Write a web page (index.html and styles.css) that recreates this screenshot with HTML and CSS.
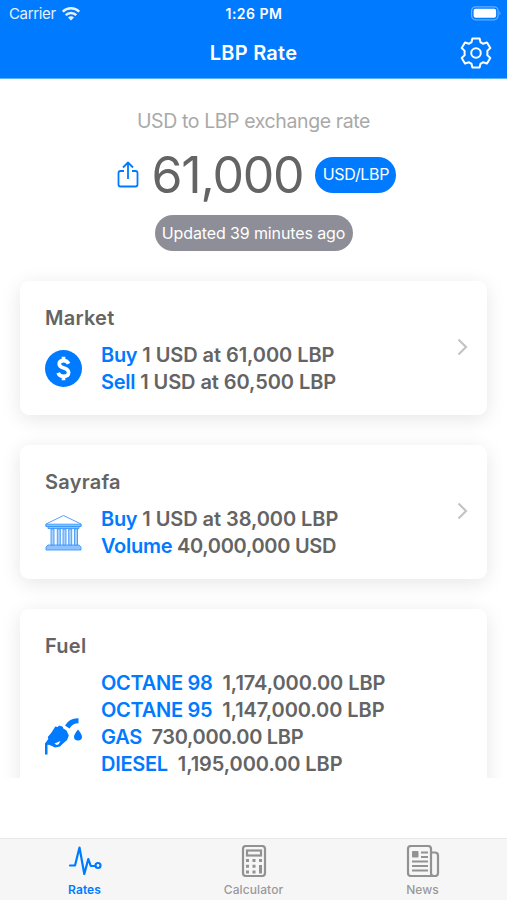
FILE: index.html
```html
<!DOCTYPE html>
<html lang="en">
<head>
<meta charset="utf-8">
<title>LBP Rate</title>
<link rel="stylesheet" href="styles.css">
</head>
<body>
<div class="app">
  <header class="header">
    <div class="status">
      <div class="carrier"><span>Carrier</span>
        <svg width="18" height="14" viewBox="0 0 18 14"><g fill="none" stroke="#fff" stroke-width="2.5"><path d="M.8 4.700a11.600 11.600 0 0 1 16.400 0"/><path d="M3.700 8.200a7.400 7.400 0 0 1 10.600 0"/></g><path d="M9 13.600 6 10.600a4.200 4.200 0 0 1 6 0z" fill="#fff"/></svg>
      </div>
      <div class="time">1:26 PM</div>
      <svg class="battery" width="31" height="15" viewBox="0 0 31 15"><rect x=".6" y=".8" width="26.5" height="13" rx="4" fill="none" stroke="#fff" stroke-opacity=".4" stroke-width="1.2"/><rect x="2.6" y="2.8" width="22.5" height="9" rx="2" fill="#fff"/><path d="M28.5 5.3q2 2 0 4z" fill="#fff" fill-opacity=".45"/></svg>
    </div>
    <div class="nav">
      <h1>LBP Rate</h1>
      <svg class="gear" width="32" height="32" viewBox="0 0 32 32" fill="none" stroke="#fff" stroke-width="2" stroke-linejoin="round"><path d="M12.400 1.400h7.200l.9 3.900q1.300.5 2.400 1.500l4.100-1.300 3.300 5.500-3 2.900q.3 2.100 0 4.200l3 2.900-3.300 5.500-4.100-1.300q-1.100 1-2.400 1.500l-.9 3.900h-7.200l-.9-3.900q-1.300-.5-2.400-1.500L5 26.500 1.700 21l3-2.900q-.3-2.100 0-4.200l-3-2.900L5 5.500l4.100 1.300q1.100-1 2.400-1.500z"/><circle cx="16" cy="16" r="4.800"/></svg>
    </div>
  </header>
  <main class="content">
    <section class="hero">
      <p class="caption">USD to LBP exchange rate</p>
      <div class="rate">
        <svg class="share" width="22" height="28" viewBox="0 0 22 28" fill="none" stroke="#007aff" stroke-width="1.800" stroke-linejoin="round"><path d="M7 10H3.500Q1.500 10 1.500 12v11.500q0 2 2 2h15q2 0 2-2V12q0-2-2-2H15M11 18V1.800M6 6.500l5-5 5 5"/></svg>
        <span class="amount">61,000</span>
        <span class="pair">USD/LBP</span>
      </div>
      <p class="updated"><span>Updated 39 minutes ago</span></p>
    </section>
    <section class="cards">
      <article class="card">
        <div class="body">
          <h2>Market</h2>
          <div class="info">
            <svg class="icon" width="37" height="37" viewBox="0 0 37 37"><circle cx="18.500" cy="18.500" r="18.500" fill="#007aff"/><path d="M23.600 13.800q-1.300-3.100-5.100-3.100-4.300 0-4.300 3.400 0 2.600 4.600 4 4.800 1.400 4.800 4.500 0 3.800-4.900 3.800-4.200 0-5.600-3.600M18.500 6.800v4M18.500 26v4.300" fill="none" stroke="#fff" stroke-width="3.700"/></svg>
            <div class="lines"><p><b>Buy</b> 1 USD at 61,000 LBP</p><p><b>Sell</b> 1 USD at 60,500 LBP</p></div>
          </div>
        </div>
        <svg class="chevron" width="11" height="18" viewBox="0 0 11 18"><path d="m1.500 1.500 7.500 7.500-7.500 7.500"/></svg>
      </article>
      <article class="card">
        <div class="body">
          <h2>Sayrafa</h2>
          <div class="info">
            <svg class="icon" width="37" height="37" viewBox="0 0 37 37" fill="#8dc2ff" stroke="#3c97fc" stroke-width=".9"><path d="M18.500 1.500 1 10v2.500h35V10z" fill="#fff"/><path d="M1 10.200h35v2.300H1zM3 12.500h31v2H3zM3 31h31l2 2.200V36H1v-2.800z"/><path d="M6 15h3v16H6zM12.300 15h3v16h-3zM18 15h3v16h-3zM23.700 15h3v16h-3zM29.500 15h3v16h-3z" fill="#a9d1ff"/></svg>
            <div class="lines"><p><b>Buy</b> 1 USD at 38,000 LBP</p><p class="tight"><b>Volume</b> 40,000,000 USD</p></div>
          </div>
        </div>
        <svg class="chevron" width="11" height="18" viewBox="0 0 11 18"><path d="m1.500 1.500 7.500 7.500-7.500 7.500"/></svg>
      </article>
      <article class="card">
        <div class="body">
          <h2>Fuel</h2>
          <div class="info fuel">
            <svg class="icon" width="37" height="37" viewBox="0 0 37 37" fill="#007aff"><path d="M20 7.500Q24.500 0 33.500.3v4.900q-6 0-9 5.300z"/><path d="M6.500 14.500 10.300 8.500l2.500.4 1.200-1.400 3.800 1.300.5 1.700 3.200 2 2.300 5-1.700 4.500-4.600 4-2.500 2.500-5 1-5.300-2.500-2.200-.3V36.500H0V25.500L3.300 21l-.5-2z"/><path d="m9.500 25.500 6-2.500-1.800 3.300-2.200.6z" fill="#fff"/><path d="M33 11.500q-4 5-4 7.200a4 3.800 0 0 0 8 0q0-2.200-4-7.200z"/></svg>
            <div class="lines"><p><b>OCTANE 98</b>&nbsp; 1,174,000.00 LBP</p><p><b>OCTANE 95</b>&nbsp; 1,147,000.00 LBP</p><p class="tight"><b>GAS</b>&nbsp; 730,000.00 LBP</p><p><b>DIESEL</b>&nbsp; 1,195,000.00 LBP</p></div>
          </div>
        </div>
      </article>
    </section>
  </main>
  <nav class="tabs">
    <div class="tab active">
      <svg width="34" height="32" viewBox="0 0 34 32" fill="none" stroke="#007aff" stroke-width="2.2" stroke-linejoin="round" stroke-linecap="round"><path d="M2 20.500h5L11.500 2.500l4.800 26.500 4-15 2.500 7H27"/><circle cx="30" cy="20.500" r="2.500"/></svg>
      <span>Rates</span>
    </div>
    <div class="tab">
      <svg width="34" height="32" viewBox="0 0 34 32" fill="none" stroke="#929292" stroke-width="2.200"><rect x="6" y="1" width="22" height="30" rx="3"/><rect x="10" y="5.500" width="14" height="5"/><path d="M9 15.500h3M15.500 15.500h3M22 15.500h3M9 21.300h3M15.500 21.300h3M9 27h3M15.500 27h3" stroke-width="3"/><path d="M23.500 20v8.500" stroke-width="3"/></svg>
      <span>Calculator</span>
    </div>
    <div class="tab">
      <svg width="34" height="32" viewBox="0 0 34 32" fill="none" stroke="#929292" stroke-width="2.200"><path d="M25 27.500V4q0-3-3-3H5Q2 1 2 4v24q0 3 3 3h24q3 0 3-3V10.500q0-3-3-3h-4V28q0 3 3 3"/><rect x="6" y="6" width="6.500" height="6.500" rx="1" fill="#929292" stroke="none"/><path d="M15 7.500h7M15 12h7M6 16.500h16M6 21h16M6 25.500h16"/></svg>
      <span>News</span>
    </div>
  </nav>
</div>
</body>
</html>
```
FILE: styles.css
```css
* { box-sizing: border-box; }
body, h1, h2, p { margin: 0; }
body { font-family: Inter, "Liberation Sans", sans-serif; background: #fff; color: #646464; }
svg { display: block; flex: none; }
.app { height: 900px; display: flex; flex-direction: column; overflow: hidden; }

.header { height: 79px; flex: none; background: #007aff; color: #fff; border-bottom: 1px solid #58b4f8; }
.status { height: 27px; display: grid; grid-template-columns: 1fr auto 1fr; align-items: center; padding: 0 5px 0 9px; font-size: 15px; }
.carrier { display: flex; align-items: center; gap: 6px; opacity: .9; letter-spacing: -.35px; }
.time { margin-right: 3px; font-size: 14px; font-weight: 600; letter-spacing: .5px; }
.battery { justify-self: end; }
.nav { height: 51px; display: grid; grid-template-columns: 1fr auto 1fr; align-items: center; padding: 0 15px; }
.nav h1 { grid-column: 2; font-size: 20px; font-weight: 600; line-height: 26px; letter-spacing: .25px; }
.gear { justify-self: end; }

.content { height: 699px; flex: none; overflow: hidden; }
.hero { height: 202px; padding-top: 29px; text-align: center; }
.caption { font-size: 19.5px; line-height: 27px; color: #a9a9a9; letter-spacing: -.4px; }
.rate { height: 56px; margin-top: 12px; padding-left: 6px; display: flex; justify-content: center; align-items: center; }
.amount { margin: 0 12px 0 13px; font-size: 50px; line-height: 56px; letter-spacing: -1.2px; }
.pair { width: 81px; height: 36px; border-radius: 18px; background: #007aff; color: #fff; font-size: 16px; line-height: 35px; letter-spacing: -.3px; }
.share { margin-top: -1px; }
.updated { display: flex; justify-content: center; margin-top: 12px; }
.updated span { width: 198px; height: 36px; border-radius: 18px; background: #8e8e98; color: #fff; font-size: 16px; line-height: 36px; letter-spacing: -.12px; white-space: nowrap; }

.cards { display: flex; flex-direction: column; gap: 30px; padding: 0 20px; }
.card { height: 134px; flex: none; padding: 24px 19px 0 25px; display: flex; align-items: flex-start; justify-content: space-between; border-radius: 9px; background: #fff; box-shadow: 0 4px 20px rgba(0, 0, 0, .1); }
.card:last-child { height: 188px; }
.card h2 { font-size: 20px; font-weight: 600; line-height: 26px; letter-spacing: .25px; }
.info { display: flex; align-items: center; gap: 19px; margin-top: 11px; }
.lines { font-size: 20px; line-height: 27px; font-weight: 600; white-space: nowrap; letter-spacing: -.07px; }
.lines b { font-weight: 600; color: #007aff; letter-spacing: -.28px; }
.lines .tight { letter-spacing: -.3px; }
.icon { margin-top: -1px; }
.fuel .icon { margin-top: 24px; }
.chevron { margin-top: 33px; fill: none; stroke: #c4c4c8; stroke-width: 2.2; }

.tabs { height: 62px; margin-top: auto; flex: none; display: grid; grid-template-columns: repeat(3, 1fr); background: #f6f6f6; border-top: 1px solid #e9e9e9; }
.tab { display: flex; flex-direction: column; align-items: center; padding-top: 6px; font-size: 12px; font-weight: 500; line-height: 16px; color: #999; letter-spacing: .1px; }
.tab span { margin-top: 5px; }
.active { color: #007aff; }
.active span { font-weight: 600; }
```
